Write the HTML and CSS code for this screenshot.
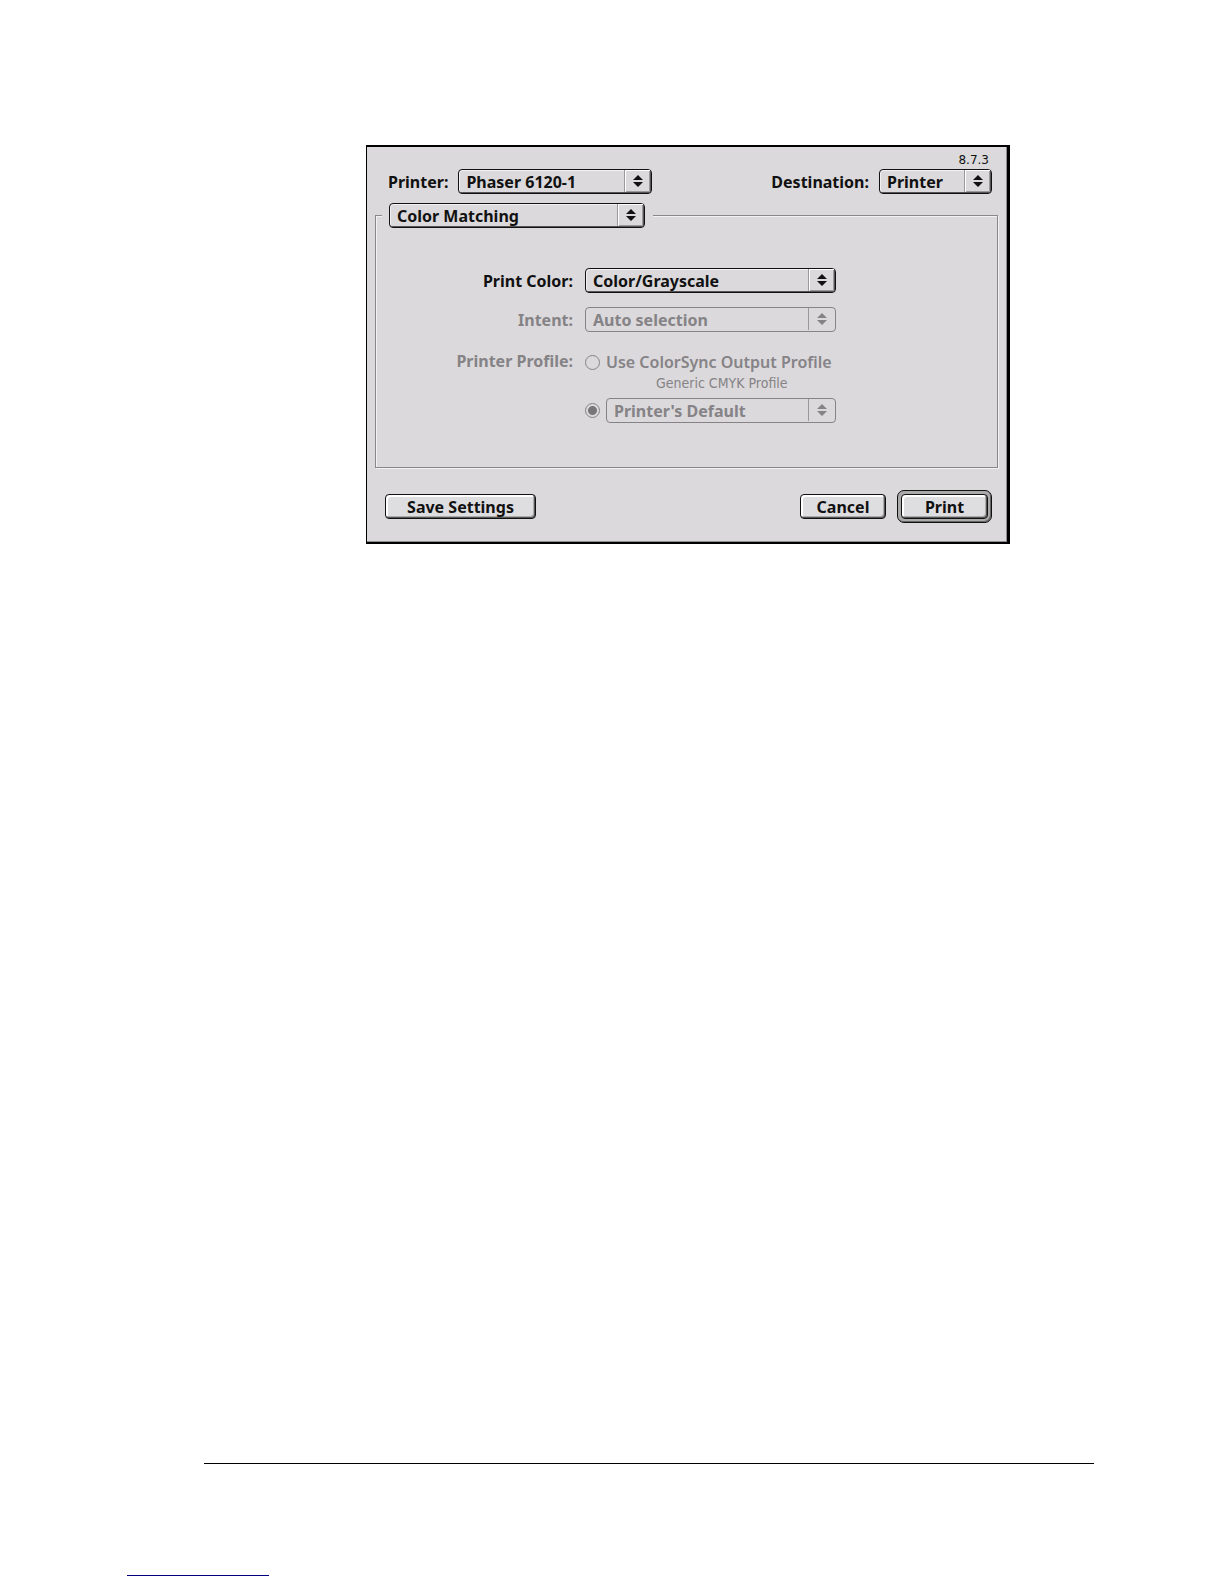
FILE: index.html
```
<!DOCTYPE html>
<html lang="en">
<head>
  <meta charset="UTF-8">
  <title>Print - Color Matching</title>
  <meta name="viewport" content="width=device-width, initial-scale=1.0">
  <link rel="stylesheet" href="styles.css">
</head>
<body>

<!-- arrows shared by all the popup menus -->
<svg width="0" height="0" class="defs" aria-hidden="true">
  <symbol id="arrows" viewBox="0 0 10 12">
    <path d="M5 0 L10 5 H0 Z M0 7 H10 L5 12 Z"/>
  </symbol>
</svg>

<main class="page">
  <form class="dialog">
    <div class="version">8.7.3</div>

    <div class="top-row">
      <div class="field">
        <label for="printer">Printer:</label>
        <div class="popup popup-printer">
          <select id="printer"><option>Phaser 6120-1</option></select>
          <span class="cap"><svg><use href="#arrows"/></svg></span>
        </div>
      </div>
      <div class="field">
        <label for="destination">Destination:</label>
        <div class="popup popup-destination">
          <select id="destination"><option>Printer</option></select>
          <span class="cap"><svg><use href="#arrows"/></svg></span>
        </div>
      </div>
    </div>

    <fieldset class="panel">
      <legend>
        <div class="popup popup-section">
          <select id="section" aria-label="Section"><option>Color Matching</option></select>
          <span class="cap"><svg><use href="#arrows"/></svg></span>
        </div>
      </legend>

      <div class="settings">
        <label class="name" for="color">Print Color:</label>
        <div class="popup">
          <select id="color"><option>Color/Grayscale</option></select>
          <span class="cap"><svg><use href="#arrows"/></svg></span>
        </div>

        <label class="name disabled" for="intent">Intent:</label>
        <div class="popup disabled">
          <select id="intent" disabled><option>Auto selection</option></select>
          <span class="cap"><svg><use href="#arrows"/></svg></span>
        </div>

        <div class="name disabled" id="profile-name">Printer Profile:</div>
        <div class="profile disabled" role="radiogroup" aria-labelledby="profile-name">
          <div class="choice">
            <input type="radio" name="profile" id="colorsync" disabled>
            <label for="colorsync">Use ColorSync Output Profile</label>
          </div>
          <div class="note">Generic CMYK Profile</div>
          <div class="choice">
            <input type="radio" name="profile" id="default" aria-label="Printer's Default" checked disabled>
            <div class="popup disabled">
              <select aria-label="Default profile" disabled><option>Printer's Default</option></select>
              <span class="cap"><svg><use href="#arrows"/></svg></span>
            </div>
          </div>
        </div>
      </div>
    </fieldset>

    <div class="buttons">
      <button type="button" class="save">Save Settings</button>
      <button type="button" class="cancel">Cancel</button>
      <div class="default-ring"><button type="button">Print</button></div>
    </div>
  </form>

  <footer>
    <hr class="page-rule">
    <div class="link-rule"></div>
  </footer>
</main>

</body>
</html>
```
FILE: styles.css
```
:root {
  --face: #dbd9dc;
  --ink: #111;
  --dim: #858386;
}

* {
  box-sizing: border-box;
}

body {
  margin: 0;
  background: #fff;
  color: var(--ink);
  font: 700 16px/24px "Noto Sans", "Open Sans", sans-serif;
}

.defs {
  position: absolute;
}

.page {
  display: flex;
  flex-direction: column;
  justify-content: space-between;
  min-height: 100vh;
  padding-top: 145px;
}

.dialog {
  margin: 0 214px 0 366px;
  padding: 4px 9px 19px 8px;
  background: var(--face);
  border: solid #000;
  border-width: 2px 3px 2px 1px;
  box-shadow: inset -1px -1px #8c8c8c;
}

.version {
  padding-right: 9px;
  text-align: right;
  font: 12px/18px "DejaVu Sans", sans-serif;
}

.top-row {
  display: flex;
  justify-content: space-between;
  padding: 0 6px 0 13px;
  margin-bottom: 9px;
}

.field {
  display: flex;
  align-items: center;
  gap: 10px;
}

/* popup menus */
.popup {
  position: relative;
  flex: 1;
  height: 25px;
}

.popup-printer {
  flex: none;
  width: 194px;
}

.popup-destination {
  flex: none;
  width: 113px;
}

.popup-section {
  width: 256px;
}

.popup select {
  appearance: none;
  display: block;
  width: 100%;
  height: 25px;
  padding: 0 28px 0 7px;
  background: var(--face);
  border: 1px solid var(--ink);
  border-radius: 4px;
  box-shadow: inset -1px -1px #555, inset 1px 1px #f2f2f2;
  color: inherit;
  font: inherit;
  line-height: 22px;
  opacity: 1;
}

.cap {
  position: absolute;
  top: 1px;
  right: 2px;
  display: flex;
  align-items: center;
  justify-content: center;
  width: 26px;
  height: 22px;
  border-left: 1px solid #999;
  box-shadow: inset 1px 1px #fff, inset -1px -1px #999;
  pointer-events: none;
}

.cap svg {
  width: 10px;
  height: 12px;
  fill: currentColor;
}

.disabled {
  color: var(--dim);
}

.popup.disabled select {
  border-color: var(--dim);
  box-shadow: none;
}

.popup.disabled .cap {
  box-shadow: none;
}

/* group box */
.panel {
  min-width: 0;
  margin: 0;
  padding: 40px 0 44px;
  border: 1px solid #888;
  box-shadow: 1px 1px #f2f2f2, inset 1px 1px #f2f2f2;
}

.panel legend {
  margin-left: 6px;
  padding: 0 8px 0 7px;
  background: var(--face);
}

.settings {
  display: grid;
  grid-template-columns: 197px 251px;
  gap: 14px 12px;
}

.name {
  padding-top: 1px;
  text-align: right;
}

#profile-name {
  padding-top: 3px;
}

.profile {
  display: flex;
  flex-direction: column;
  padding-top: 4px;
}

.choice {
  display: flex;
  align-items: center;
  gap: 6px;
}

.choice label {
  font-weight: 600;
  white-space: nowrap;
}

.choice input {
  appearance: none;
  width: 15px;
  height: 15px;
  margin: 0;
  border: 1px solid var(--dim);
  border-radius: 50%;
}

.choice input:checked {
  background: radial-gradient(circle, #777 4px, transparent 5px);
}

.note {
  margin-bottom: 6px;
  padding-left: 71px;
  font: 14px/18px "DejaVu Sans Condensed", "DejaVu Sans", sans-serif;
}

/* buttons */
.buttons {
  display: flex;
  align-items: center;
  gap: 11px;
  margin-top: 22px;
  padding: 0 6px 0 10px;
}

button {
  height: 25px;
  padding: 0;
  background: #dedde0;
  border: 1px solid var(--ink);
  border-radius: 4px;
  box-shadow: inset -1px -1px #555, inset -2px -2px #aaa, inset 2px 2px #fff;
  color: inherit;
  font: inherit;
  line-height: 22px;
}

.save {
  width: 151px;
  margin-right: auto;
}

.cancel {
  width: 86px;
}

.default-ring {
  padding: 3px;
  background: #aaa;
  border: 1px solid var(--ink);
  border-radius: 7px;
  box-shadow: inset -1px -1px #666;
}

.default-ring button {
  display: block;
  width: 87px;
}

/* foot of the page */
.page-rule {
  height: 1px;
  margin: 0 130px 111px 204px;
  border: 0;
  background: #000;
}

.link-rule {
  width: 142px;
  height: 1px;
  margin: 0 0 8px 127px;
  background: #000080;
}
```
